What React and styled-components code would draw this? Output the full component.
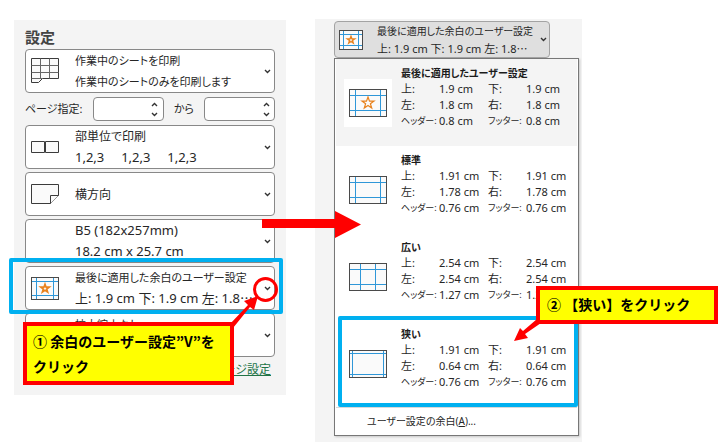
import styled, { createGlobalStyle } from "styled-components";

const GlobalStyle = createGlobalStyle`
  * {
    box-sizing: border-box;
  }

  body {
    margin: 0;
    background: white;
    color: #262626;
    font-family: "Noto Sans", "Noto Sans CJK JP", sans-serif;
    font-feature-settings: "palt";
  }

  button,
  input {
    font: inherit;
    font-feature-settings: inherit;
    color: inherit;
    text-align: left;
  }
`;

const Page = styled.main`
  display: grid;
  grid-template-columns: 272fr 267fr;
  gap: 29px;
  align-items: start;
  padding: 19px 137px 6px 14px;
`;

const Panel = styled.section`
  position: relative;
  min-width: 0;
  background: #f4f4f4;
`;

const SettingsPanel = styled(Panel)`
  margin-top: 1px;
  padding: 6px 11px 15px;
`;

const MarginsPanel = styled(Panel)`
  padding: 2px 3px 6px 19px;
`;

const Heading = styled.h2`
  margin: 0 0 1px;
  color: #444;
  font-size: 15px;
  line-height: 22px;
  font-weight: 700;
`;

const SettingList = styled.div`
  display: flex;
  flex-direction: column;
  gap: 3px;
`;

const SettingRow = styled.div`
  position: relative;
`;

const DropButton = styled.button`
  display: flex;
  align-items: center;
  gap: ${(props) => (props.$compact ? "14px" : "16px")};
  width: ${(props) => (props.$compact ? "88%" : "100%")};
  height: ${(props) => (props.$compact ? "37px" : "44px")};
  padding: 0 ${(props) => (props.$compact ? "2px" : "3px")} 0
    ${(props) => (props.$compact ? "4px" : "5px")};
  background: ${(props) => (props.$compact ? "#dfdfdf" : "white")};
  border: 1px solid ${(props) => (props.$compact ? "#a3a3a3" : "#888")};
  border-radius: 4px;
  line-height: ${(props) => (props.$compact ? "18px" : "21px")};
  cursor: pointer;
`;

const IconSlot = styled.span`
  flex: none;
  display: flex;
  width: ${(props) => (props.$compact ? "24px" : "28px")};
`;

const ButtonText = styled.span`
  flex: 1;
  min-width: 0;
  white-space: pre;
`;

const Line = styled.span`
  display: block;
  font-size: ${(props) => props.$size}px;
`;

const PageRange = styled.div`
  display: flex;
  align-items: center;
  gap: 10px;
  height: 26px;
  font-size: 11px;
  line-height: 24px;
  white-space: nowrap;

  label:first-child {
    flex: 1;
  }
`;

const SpinBox = styled.span`
  display: flex;
  width: 71px;
  height: 24px;
  padding: 1px 2px;
  background: white;
  border: 1px solid #888;
  border-radius: 4px;

  input {
    flex: 1;
    min-width: 0;
    padding: 0 4px;
    background: none;
    border: 0;
    outline: 0;
  }
`;

const SpinButtons = styled.span`
  display: flex;
  flex-direction: column;
  justify-content: space-between;

  button {
    display: flex;
    align-items: center;
    justify-content: center;
    width: 12px;
    height: 10px;
    padding: 0;
    background: none;
    border: 0;
  }
`;

const PageSetupLink = styled.a`
  display: block;
  margin: 3px 4px 0 0;
  color: #217346;
  font-size: 12px;
  line-height: 20px;
  text-align: right;
`;

const Menu = styled.div`
  padding: 0 1px;
  background: white;
  border: 1px solid #777;
  box-shadow: 1px 1px 2px #00000030;
`;

const MenuItem = styled.button`
  position: relative;
  display: flex;
  align-items: center;
  gap: 9px;
  width: 100%;
  height: 87px;
  padding: 0 0 0 8px;
  background: ${(props) => (props.$active ? "#f4f4f4" : "white")};
  border: 0;
  font-size: 11px;
  line-height: 16px;
  cursor: pointer;
`;

const Thumb = styled.span`
  flex: none;
  display: flex;
  align-items: center;
  justify-content: center;
  width: 48px;
  height: 48px;
  background: white;
`;

const Values = styled.span`
  flex: 1;
  align-self: flex-start;
  display: grid;
  grid-template-columns: 38px 49px 38px auto;
  padding-top: 6px;
  white-space: nowrap;

  strong {
    grid-column: 1 / -1;
    color: #1b1b1b;
    font-size: 10px;
  }
`;

const Small = styled.span`
  font-size: 9px;
`;

const CustomMargins = styled.button`
  display: block;
  width: 100%;
  padding: 0 31px;
  background: white;
  border: 0;
  border-top: 1px solid #d8d8d8;
  font-size: 10px;
  line-height: 27px;
  cursor: pointer;
`;

const Highlight = styled.span`
  position: absolute;
  z-index: 2;
  inset: ${(props) => props.$inset};
  border: 4px solid #00b0f0;
  border-radius: 2px;
  pointer-events: none;
`;

const Ring = styled.span`
  position: absolute;
  z-index: 3;
  top: 11px;
  right: -3px;
  width: 25px;
  height: 25px;
  border: 3px solid red;
  border-radius: 50%;
  pointer-events: none;
`;

const Callout = styled.p`
  position: absolute;
  z-index: 4;
  top: ${(props) => props.$top};
  left: ${(props) => props.$left};
  width: ${(props) => props.$width};
  margin: 0;
  padding: ${(props) => props.$padding};
  background: yellow;
  border: 4px solid red;
  color: black;
  font-size: 14px;
  line-height: 25px;
  font-weight: 700;
  font-family: "Noto Sans CJK JP", sans-serif;
  font-feature-settings: normal;
  white-space: nowrap;
`;

const Arrow = styled.svg`
  position: absolute;
  z-index: 4;
  top: ${(props) => props.$top};
  left: ${(props) => props.$left};
  fill: red;
  pointer-events: none;
`;

function Chevron({ up }) {
  return (
    <svg width="7" height="5" viewBox="0 0 7 5" fill="none" stroke="#333" strokeWidth="1.4">
      <path d={up ? "M1 4L3.5 1.5L6 4" : "M1 1L3.5 3.5L6 1"} />
    </svg>
  );
}

function SheetIcon() {
  return (
    <svg width="28" height="26" viewBox="0 0 28 26" fill="#fafafa" stroke="#3b3b3b">
      <path d="M.5 .5H27.5V20.5H11.5L7.5 24.5H.5Z" />
      <path d="M.5 7.5H27.5M.5 14.5H27.5M9.5 .5V20.5M18.5 .5V20.5M11.5 20.5H.5" fill="none" stroke="#666" />
    </svg>
  );
}

function CollateIcon() {
  return (
    <svg width="28" height="12" viewBox="0 0 28 12" fill="#fafafa" stroke="#3b3b3b">
      <path d="M.5 .5H13.5V11.5H.5ZM14.5 .5H27.5V11.5H14.5Z" />
    </svg>
  );
}

function LandscapeIcon() {
  return (
    <svg width="28" height="20" viewBox="0 0 28 20" fill="#fafafa" stroke="#3b3b3b">
      <path d="M.5 .5H27.5V11.5L19.5 19.5H.5Z" />
      <path d="M27.5 11.5H19.5V19.5" />
    </svg>
  );
}

const STAR = "M0 -6L1.5 -1.9H6L2.4 .8L3.7 5L0 2.5L-3.7 5L-2.4 .8L-6 -1.9H-1.5Z";

// x, y: distance of the guides from the page edge
function MarginIcon({ width = 38, height = 28, x, y, star }) {
  const right = width - 0.5 - x;
  const bottom = height - 0.5 - y;
  return (
    <svg width={width} height={height} viewBox={`0 0 ${width} ${height}`} fill="none">
      <rect x=".5" y=".5" width={width - 1} height={height - 1} fill="#fafafa" />
      <path
        d={`M${x + 0.5} 0V${height}M${right} 0V${height}M0 ${y + 0.5}H${width}M0 ${bottom}H${width}`}
        stroke="#2f97d8"
      />
      <rect x=".5" y=".5" width={width - 1} height={height - 1} stroke="#4a4a4a" />
      {star && (
        <path
          d={STAR}
          transform={`translate(${width / 2} ${height / 2}) scale(${star})`}
          stroke="#e8821e"
          strokeWidth={star < 1 ? 2.4 : 1.2}
        />
      )}
    </svg>
  );
}

function Setting({ icon, lines, sizes, compact, children }) {
  return (
    <SettingRow>
      <DropButton type="button" aria-haspopup="menu" $compact={compact}>
        <IconSlot $compact={compact}>{icon}</IconSlot>
        <ButtonText>
          {lines.map((line, i) => (
            <Line key={line} $size={sizes[i]}>{line}</Line>
          ))}
        </ButtonText>
        <Chevron />
      </DropButton>
      {children}
    </SettingRow>
  );
}

function Spin({ id }) {
  return (
    <SpinBox>
      <input id={id} type="text" inputMode="numeric" />
      <SpinButtons>
        <button type="button" aria-label="+"><Chevron up /></button>
        <button type="button" aria-label="-"><Chevron /></button>
      </SpinButtons>
    </SpinBox>
  );
}

const presets = [
  { name: "最後に適用したユーザー設定", v: "1.9 cm", h: "1.8 cm", edge: "0.8 cm", x: 6, y: 6, star: 1, active: true },
  { name: "標準", v: "1.91 cm", h: "1.78 cm", edge: "0.76 cm", x: 6, y: 6 },
  { name: "広い", v: "2.54 cm", h: "2.54 cm", edge: "1.27 cm", x: 11, y: 6 },
  { name: "狭い", v: "1.91 cm", h: "0.64 cm", edge: "0.76 cm", x: 3, y: 3, marked: true },
];

function Preset({ preset }) {
  const { name, v, h, edge, x, y, star, active, marked } = preset;
  return (
    <MenuItem type="button" role="menuitem" $active={active}>
      <Thumb><MarginIcon x={x} y={y} star={star} /></Thumb>
      <Values>
        <strong>{name}</strong>
        <span>上:</span><span>{v}</span><span>下:</span><span>{v}</span>
        <span>左:</span><span>{h}</span><span>右:</span><span>{h}</span>
        <Small>ヘッダー:</Small><span>{edge}</span><Small>フッター:</Small><span>{edge}</span>
      </Values>
      {marked && <Highlight $inset="-4px -1px 0 2px" />}
    </MenuItem>
  );
}

function App() {
  return (
    <>
      <GlobalStyle />
      <Page>
        <SettingsPanel>
          <Heading>設定</Heading>
          <SettingList>
            <Setting
              icon={<SheetIcon />}
              lines={["作業中のシートを印刷", "作業中のシートのみを印刷します"]}
              sizes={[11, 11]}
            />
            <PageRange>
              <label htmlFor="from">ページ指定:</label>
              <Spin id="from" />
              <label htmlFor="to">から</label>
              <Spin id="to" />
            </PageRange>
            <Setting
              icon={<CollateIcon />}
              lines={["部単位で印刷", "1,2,3     1,2,3     1,2,3"]}
              sizes={[12, 13]}
            />
            <Setting icon={<LandscapeIcon />} lines={["横方向"]} sizes={[12]} />
            <Setting lines={["B5 (182x257mm)", "18.2 cm x 25.7 cm"]} sizes={[13, 13]} />
            <Setting
              icon={<MarginIcon width={28} height={23} x={5} y={4} star={0.7} />}
              lines={["最後に適用した余白のユーザー設定", "上: 1.9 cm 下: 1.9 cm 左: 1.8⋯"]}
              sizes={[11, 13]}
            >
              <Highlight $inset="-8px -8px -4px -16px" />
              <Ring />
            </Setting>
            <Setting lines={["拡大縮小なし", "実際のサイズでシートを印刷ー"]} sizes={[11, 12]} />
          </SettingList>
          <PageSetupLink href="#page-setup">ページ設定</PageSetupLink>

          <Arrow $top="275px" $left="212px" width="36" height="34" viewBox="0 0 36 34">
            <path d="M4 29L22 10L18 6L32 1L28 15L24 12L7 33Z" />
          </Arrow>
          <Callout $top="302px" $left="9px" $width="211px" $padding="3px 6px 2px">
            ① 余白のユーザー設定”V”を
            <br />
            クリック
          </Callout>
        </SettingsPanel>

        <MarginsPanel>
          <Setting
            compact
            icon={<MarginIcon width={24} height={20} x={4} y={4} star={0.6} />}
            lines={["最後に適用した余白のユーザー設定", "上: 1.9 cm 下: 1.9 cm 左: 1.8⋯"]}
            sizes={[10, 11]}
          />
          <Menu role="menu">
            {presets.map((preset) => (
              <Preset key={preset.name} preset={preset} />
            ))}
            <CustomMargins type="button" role="menuitem">
              ユーザー設定の余白(<u>A</u>)...
            </CustomMargins>
          </Menu>

          <Arrow $top="192px" $left="-53px" width="99" height="27" viewBox="0 0 99 27">
            <path d="M0 8H73V0L99 13.5L73 27V17H0Z" />
          </Arrow>
          <Arrow $top="298px" $left="198px" width="30" height="26" viewBox="0 0 30 26">
            <path d="M1 24L7 11L10 14L24 2L28 6L12 17L15 21Z" />
          </Arrow>
          <Callout $top="267px" $left="221px" $width="182px" $padding="2px 7px 3px">
            ② 【狭い】をクリック
          </Callout>
        </MarginsPanel>
      </Page>
    </>
  );
}

export default App;
